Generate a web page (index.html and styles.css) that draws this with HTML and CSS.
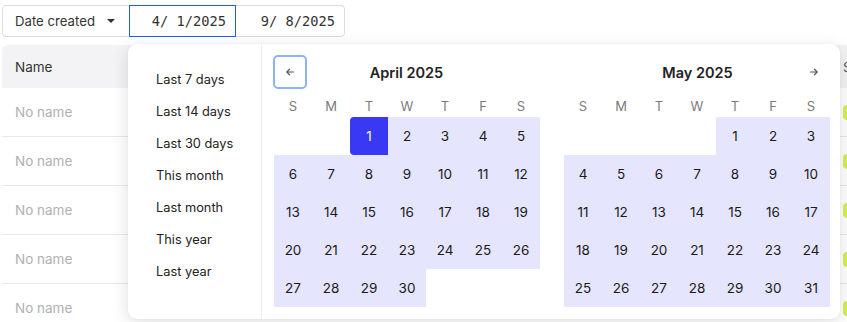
FILE: index.html
```html
<!DOCTYPE html>
<html>
<head>
<meta charset="utf-8">
<link rel="stylesheet" href="styles.css">
</head>
<body>
<div class="page">
  <div class="toolbar">
    <div class="filter">
      <div class="select">Date created <span class="caret"></span></div>
      <div class="date active">4/ 1/2025</div>
      <div class="date">9/ 8/2025</div>
    </div>
  </div>

  <div class="table">
    <div class="row head"><div class="cell name">Name</div><div class="cell extra">S</div></div>
    <div class="row"><div class="cell name muted">No name</div><div class="cell extra"><span class="badge"></span></div></div>
    <div class="row"><div class="cell name muted">No name</div><div class="cell extra"><span class="badge"></span></div></div>
    <div class="row"><div class="cell name muted">No name</div><div class="cell extra"><span class="badge"></span></div></div>
    <div class="row"><div class="cell name muted">No name</div><div class="cell extra"><span class="badge"></span></div></div>
    <div class="row"><div class="cell name muted">No name</div><div class="cell extra"><span class="badge"></span></div></div>
  </div>

  <div class="popover">
    <ul class="presets">
      <li>Last 7 days</li>
      <li>Last 14 days</li>
      <li>Last 30 days</li>
      <li>This month</li>
      <li>Last month</li>
      <li>This year</li>
      <li>Last year</li>
    </ul>
    <div class="calendars">
      <div class="month">
        <div class="month-head">
          <button class="nav prev" aria-label="Previous month">
            <svg width="10" height="10" viewBox="0 0 10 10"><path d="M8.5 5H1.8M4.6 2.2L1.8 5l2.8 2.8" fill="none" stroke="#555" stroke-width="1.2" stroke-linecap="round" stroke-linejoin="round"/></svg>
          </button>
          <div class="title">April 2025</div>
          <span class="nav-space"></span>
        </div>
        <div class="dow"><span>S</span><span>M</span><span>T</span><span>W</span><span>T</span><span>F</span><span>S</span></div>
        <div class="grid">
          <span></span><span></span>
          <span class="in sel">1</span><span class="in">2</span><span class="in">3</span><span class="in">4</span><span class="in">5</span>
          <span class="in">6</span><span class="in">7</span><span class="in">8</span><span class="in">9</span><span class="in">10</span><span class="in">11</span><span class="in">12</span>
          <span class="in">13</span><span class="in">14</span><span class="in">15</span><span class="in">16</span><span class="in">17</span><span class="in">18</span><span class="in">19</span>
          <span class="in">20</span><span class="in">21</span><span class="in">22</span><span class="in">23</span><span class="in">24</span><span class="in">25</span><span class="in">26</span>
          <span class="in">27</span><span class="in">28</span><span class="in">29</span><span class="in">30</span>
        </div>
      </div>
      <div class="month">
        <div class="month-head">
          <span class="nav-space"></span>
          <div class="title">May 2025</div>
          <button class="nav next" aria-label="Next month">
            <svg width="10" height="10" viewBox="0 0 10 10"><path d="M1.5 5h6.7M5.4 2.2L8.2 5 5.4 7.8" fill="none" stroke="#555" stroke-width="1.2" stroke-linecap="round" stroke-linejoin="round"/></svg>
          </button>
        </div>
        <div class="dow"><span>S</span><span>M</span><span>T</span><span>W</span><span>T</span><span>F</span><span>S</span></div>
        <div class="grid">
          <span></span><span></span><span></span><span></span>
          <span class="in">1</span><span class="in">2</span><span class="in">3</span>
          <span class="in">4</span><span class="in">5</span><span class="in">6</span><span class="in">7</span><span class="in">8</span><span class="in">9</span><span class="in">10</span>
          <span class="in">11</span><span class="in">12</span><span class="in">13</span><span class="in">14</span><span class="in">15</span><span class="in">16</span><span class="in">17</span>
          <span class="in">18</span><span class="in">19</span><span class="in">20</span><span class="in">21</span><span class="in">22</span><span class="in">23</span><span class="in">24</span>
          <span class="in">25</span><span class="in">26</span><span class="in">27</span><span class="in">28</span><span class="in">29</span><span class="in">30</span><span class="in">31</span>
        </div>
      </div>
    </div>
  </div>
</div>
</body>
</html>
```

FILE: styles.css
```css
* { box-sizing: border-box; }
html, body { margin: 0; padding: 0; background: #fff; overflow: hidden; }
body {
  font-family: Inter, "Noto Sans", sans-serif;
  color: #222;
  width: 847px;
  height: 322px;
}
.page {
  position: relative;
  padding: 5px 0 0 2px;
}
.toolbar { display: flex; height: 32px; }
.filter {
  display: flex;
  border: 1px solid #dcdcdf;
  border-radius: 4px;
  height: 32px;
}
.select {
  width: 126px;
  display: flex;
  align-items: center;
  padding-left: 12px;
  font-size: 13.2px;
  color: #333;
}
.caret {
  margin-left: 12px;
  width: 0; height: 0;
  border-left: 4px solid transparent;
  border-right: 4px solid transparent;
  border-top: 4px solid #333;
}
.date {
  width: 108px;
  display: flex;
  align-items: center;
  justify-content: flex-end;
  padding-right: 9px;
  font-family: "DejaVu Sans Mono", "Liberation Mono", monospace;
  font-size: 13.7px;
  white-space: pre;
  color: #333;
}
.date.active {
  width: 107px;
  border: 1px solid #1f5fe8;
  margin: -1px 0;
  height: 32px;
}
.table { margin-top: 8px; width: 880px; }
.row {
  display: grid;
  grid-template-columns: 840px 1fr;
  height: 49px;
  border-bottom: 1px solid #e8e8ea;
  align-items: center;
}
.row.head {
  height: 43px;
  background: #f3f3f5;
  border-bottom: none;
  border-radius: 6px 0 0 0;
}
.cell.name { padding-left: 13px; font-size: 13.5px; color: #333; }
.cell.muted { color: #b0b0b4; }
.cell.extra { font-size: 13.5px; color: #555; white-space: nowrap; padding-left: 1px; }
.badge {
  display: block;
  width: 24px;
  height: 15px;
  background: #d8ef55;
  border-radius: 4px;
}
.popover {
  position: absolute;
  left: 128px;
  top: 44px;
  width: 712px;
  height: 275px;
  background: #fff;
  border-radius: 9px;
  box-shadow: 0 4px 18px rgba(0,0,0,0.13), 0 0 2px rgba(0,0,0,0.05);
  display: flex;
}
.presets {
  list-style: none;
  margin: 0;
  padding: 20px 0 0 28px;
  width: 134px;
  border-right: 1px solid #ececee;
}
.presets li {
  height: 32px;
  line-height: 32px;
  font-size: 12.8px;
  color: #222;
}
.calendars {
  display: flex;
  gap: 24px;
  padding: 11px 0 0 12px;
}
.month { width: 266px; }
.month-head {
  height: 34px;
  display: flex;
  align-items: center;
  justify-content: space-between;
}
.nav, .nav-space {
  width: 34px;
  height: 34px;
  display: flex;
  align-items: center;
  justify-content: center;
  background: #fff;
  padding: 0;
}
.nav { border: none; }
.nav.prev {
  margin-left: -1px;
  border: 2px solid #8fb1f6;
  border-radius: 5px;
}
.nav.next { margin-right: -1px; }
.title {
  font-size: 14.5px;
  font-weight: 600;
  color: #222;
}
.dow {
  display: grid;
  grid-template-columns: repeat(7, 38px);
  margin-top: 8px;
  height: 18px;
  align-items: center;
}
.dow span {
  text-align: center;
  font-size: 13px;
  color: #7a7a7e;
}
.grid {
  margin-top: 2px;
  display: grid;
  grid-template-columns: repeat(7, 38px);
  grid-auto-rows: 38px;
}
.grid span {
  display: flex;
  align-items: center;
  justify-content: center;
  font-size: 13.5px;
  color: #1a1a1a;
}
.grid span.in { background: #e5e5fd; }
.grid span.sel {
  background: #3838f5;
  color: #fff;
  border-radius: 4px 0 0 4px;
}
```
